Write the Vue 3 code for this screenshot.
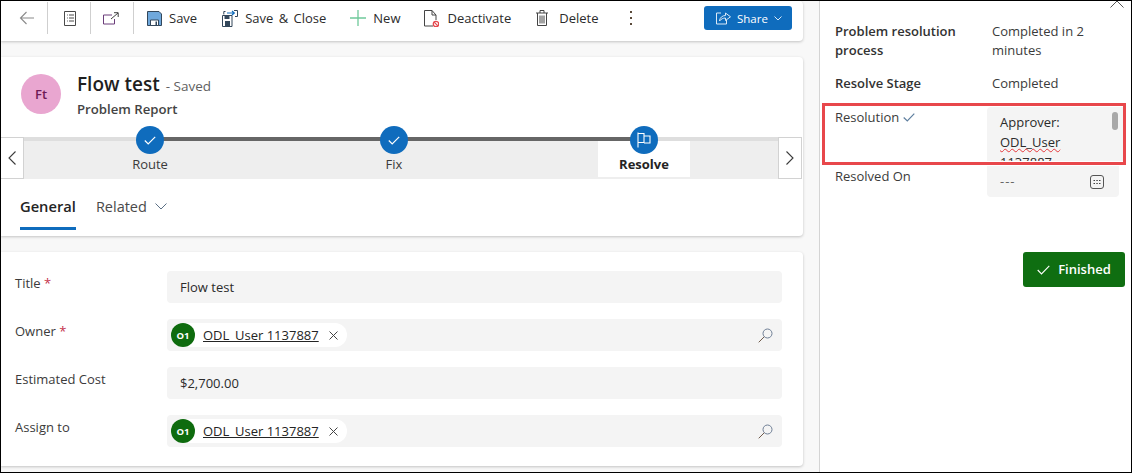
<script setup>
const fields = [
  { label: 'Title', required: true, value: 'Flow test' },
  { label: 'Owner', required: true, user: 'ODL_User 1137887' },
  { label: 'Estimated Cost', value: '$2,700.00' },
  { label: 'Assign to', user: 'ODL_User 1137887' },
]
</script>

<template>
  <div class="page">
    <div class="main">
      <div class="card toolbar">
        <svg class="back" width="16" height="14" viewBox="0 0 16 14" fill="none" stroke="#8a8a8a" stroke-width="1.1"><path d="M15 7H1.5M7.5 1 1.5 7l6 6" /></svg>
        <span class="sep"></span>
        <svg class="form-icon" width="14" height="17" viewBox="0 0 14 17" fill="none" stroke="#4a4a4a"><path d="M1.5 1.5h11v14h-11zM4 5h.8M6 5h5M4 8h.8M6 8h5M4 11h.8M6 11h5" /></svg>
        <span class="sep"></span>
        <svg class="open-icon" width="16" height="13" viewBox="0 0 16 13" fill="none"><path d="M9 3H.5v9h11V7" stroke="#6b3d7a" /><path d="M8 7l7-6M11 .7h4.2V5" stroke="#404040" /></svg>
        <span class="sep"></span>

        <button class="tool first" type="button">
          <svg width="15" height="15" viewBox="0 0 15 15"><path d="M.5.5h11.500l2.500 2.500v11.500H.5z" fill="#6fa8dc" stroke="#33475b" /><path d="M3.500 9h8v5.500h-8z" fill="#fff" stroke="#33475b" /><path d="M8.500 10.500h1.500v4H8.500z" fill="#33475b" /></svg>
          Save
        </button>
        <button class="tool save-close" type="button">
          <svg width="16" height="17" viewBox="0 0 16 17" fill="none"><path d="M.5 5.500h9.500v11H.5z" fill="#fff" stroke="#33475b" /><path d="M3 11h5v5H3z" fill="#33475b" /><path d="M2.500 6h5v3h-5z" fill="#33475b" /><path d="M3.500 1.500H1.800v3M12 .5h3.500v6H13" stroke="#33475b" /><path d="M5 3h7M10 1l2.300 2L10 5" stroke="#0f6cbd" stroke-width="1.200" /></svg>
          Save &amp; Close
        </button>
        <button class="tool" type="button">
          <svg width="16" height="16" viewBox="0 0 16 16" fill="none" stroke="#6fc99a" stroke-width="1.300"><path d="M8 0v16M0 8h16" /></svg>
          New
        </button>
        <button class="tool deactivate" type="button">
          <svg width="15" height="17" viewBox="0 0 15 17" fill="none"><path d="M9 16H.5V.5H8L12 5v5M8 .5V5h4" stroke="#444" /><circle cx="12" cy="14" r="2.700" stroke="#e5484d" stroke-width="1.300" fill="#fff" /><path d="M10.200 12.200l3.600 3.600" stroke="#e5484d" stroke-width="1.200" /></svg>
          Deactivate
        </button>
        <button class="tool delete" type="button">
          <svg width="12" height="16" viewBox="0 0 12 16" fill="none" stroke="#444"><path d="M0 3h12M4 3V.5h4V3M1.500 3v12.500h9V3M4 5.500v8M6 5.500v8M8 5.500v8" /></svg>
          Delete
        </button>
        <span class="kebab"><i></i><i></i><i></i></span>
        <button class="share" type="button">
          <svg width="15" height="14" viewBox="0 0 15 14" fill="none" stroke="#dbe9f6"><path d="M5 2H.5v11h10V9" /><path d="M3.500 10c.2-3.500 3-5.500 6-5.500V2L14.500 5.800 9.500 9.500V7C7 7 5 8 3.500 10z" /></svg>
          <span>Share</span>
          <svg width="8" height="5" viewBox="0 0 8 5" fill="none" stroke="#dbe9f6"><path d="M.5.5 4 4 7.500.5" /></svg>
        </button>
      </div>

      <div class="card header">
        <div class="record">
          <div class="avatar">Ft</div>
          <div>
            <div class="title-line"><span class="title">Flow test</span><span class="saved">- Saved</span></div>
            <div class="entity">Problem Report</div>
          </div>
        </div>

        <div class="bpf">
          <button class="nav" type="button">
            <svg width="8" height="14" viewBox="0 0 8 14" fill="none" stroke="#3b3b3b" stroke-width="1.100"><path d="M7.500.5 1 7l6.500 6.500" /></svg>
          </button>
          <div class="stages">
            <span class="rail"></span>
            <span class="rail-done"></span>
            <div class="stage">
              <span class="dot"><svg width="12" height="9" viewBox="0 0 12 9" fill="none" stroke="#fff" stroke-width="1.200"><path d="M.8 4.500 4.200 8 11.200.8" /></svg></span>
              <span class="stage-name">Route</span>
            </div>
            <div class="stage">
              <span class="dot"><svg width="12" height="9" viewBox="0 0 12 9" fill="none" stroke="#fff" stroke-width="1.200"><path d="M.8 4.500 4.200 8 11.200.8" /></svg></span>
              <span class="stage-name">Fix</span>
            </div>
            <div class="stage current">
              <span class="dot"><svg width="14" height="16" viewBox="0 0 14 16" fill="none" stroke="#fff" stroke-width="1.100"><path d="M1 .5V15.500M1 1.500h6v9H1M7 4h6v7H7" /></svg></span>
              <span class="stage-name">Resolve</span>
            </div>
          </div>
          <button class="nav" type="button">
            <svg width="8" height="14" viewBox="0 0 8 14" fill="none" stroke="#3b3b3b" stroke-width="1.100"><path d="M.5.500 7 7 .5 13.500" /></svg>
          </button>
        </div>

        <div class="tabs">
          <span class="tab active">General</span>
          <span class="tab">Related
            <svg width="12" height="7" viewBox="0 0 12 7" fill="none" stroke="#5b6f85"><path d="M.5.500 6 6 11.500.5" /></svg>
          </span>
        </div>
      </div>

      <div class="card form">
        <div v-for="f in fields" :key="f.label" class="row">
          <div class="label">{{ f.label }}<span v-if="f.required" class="req"> *</span></div>
          <div class="input">
            <template v-if="f.user">
              <span class="chip">
                <span class="chip-avatar">O1</span>
                <span class="chip-name">{{ f.user }}</span>
                <svg width="9" height="9" viewBox="0 0 9 9" fill="none" stroke="#444"><path d="M.5.500l8 8M8.500.500l-8 8" /></svg>
              </span>
              <svg class="search" width="15" height="15" viewBox="0 0 15 15" fill="none"><circle cx="9.500" cy="5.500" r="4.500" stroke="#6f7f96" /><path d="M6.200 8.800.7 14.300" stroke="#6f5a4a" /></svg>
            </template>
            <span v-else class="value">{{ f.value }}</span>
          </div>
        </div>
      </div>
    </div>

    <aside class="panel">
      <svg class="collapse" width="14" height="8" viewBox="0 0 14 8" fill="none" stroke="#555"><path d="M.5 7.500 7 1l6.500 6.500" /></svg>

      <div class="prow first">
        <div class="plabel strong">Problem resolution process</div>
        <div class="pvalue">Completed in 2 minutes</div>
      </div>
      <div class="prow stage-row">
        <div class="plabel strong">Resolve Stage</div>
        <div class="pvalue">Completed</div>
      </div>
      <div class="prow resolution">
        <div class="plabel">Resolution
          <svg width="12" height="9" viewBox="0 0 12 9" fill="none" stroke="#5f7f9f" stroke-width="1.200"><path d="M.7 4.500 4.300 8 11.300.7" /></svg>
        </div>
        <div class="textarea">
          <div>Approver:</div>
          <div><span class="squiggle">ODL_User</span></div>
          <div>1137887</div>
          <span class="thumb"></span>
        </div>
        <span class="highlight"></span>
      </div>
      <div class="prow">
        <div class="plabel">Resolved On</div>
        <div class="date">
          <span class="empty">---</span>
          <svg width="14" height="14" viewBox="0 0 14 14" fill="none"><rect x=".5" y=".5" width="13" height="13" rx="2.500" stroke="#555" /><path d="M3.500 5.500h1.500M6.300 5.500h1.500M9 5.500h1.500M3.500 8.500h1.500M6.300 8.500h1.500M9 8.500h1.500" stroke="#444" /></svg>
        </div>
      </div>

      <button class="finished" type="button">
        <svg width="13" height="10" viewBox="0 0 13 10" fill="none" stroke="#fff" stroke-width="1.100"><path d="M.7 5 4.500 9 12.300.8" /></svg>
        Finished
      </button>
    </aside>
  </div>
</template>

<style>
body {
  background: #fff;
}
</style>

<style scoped>
.page {
  display: flex;
  box-sizing: border-box;
  width: 1132px;
  height: 473px;
  overflow: hidden;
  border: 1px solid #000;
  font-family: "Open Sans", "Noto Sans", sans-serif;
  font-size: 13px;
  color: #2b2b2b;
  background: #fff;
}

button {
  padding: 0;
  border: none;
  background: none;
  font: inherit;
  color: inherit;
}

.main {
  display: flex;
  flex-direction: column;
  gap: 16px;
  box-sizing: border-box;
  width: 819px;
  padding-right: 16px;
  background: #f8f8f8;
  border-right: 1px solid #d4d4d4;
}

.card {
  background: #fff;
  border-radius: 0 4px 4px 0;
  box-shadow: 0 1px 3px rgba(0, 0, 0, .22);
}

.toolbar {
  display: flex;
  align-items: center;
  box-sizing: border-box;
  height: 40px;
  padding-bottom: 6px;
  flex: none;
}

.back {
  margin-left: 18px;
}

.sep {
  align-self: flex-start;
  width: 1px;
  height: 32px;
  margin-top: 1px;
  background: #cfcfcf;
}

.back + .sep {
  margin-left: 12px;
}

.form-icon {
  margin: 0 13px 0 15px;
}

.open-icon {
  margin: 0 14px 0 12px;
}

.tool {
  display: flex;
  align-items: center;
  gap: 7px;
  margin-left: 24px;
  white-space: nowrap;
}

.tool.first {
  margin-left: 13px;
}

.save-close {
  margin-left: 25px;
  word-spacing: 2px;
}

.deactivate {
  gap: 8px;
}

.delete {
  gap: 11px;
  margin-left: 25px;
}

.kebab {
  display: flex;
  flex-direction: column;
  gap: 4px;
  margin-left: 32px;
}

.kebab i {
  width: 2px;
  height: 2px;
  background: #5a4a3a;
}

.share {
  display: flex;
  align-items: center;
  gap: 6px;
  box-sizing: border-box;
  width: 88px;
  height: 24px;
  margin-left: auto;
  margin-right: 11px;
  padding-left: 12px;
  border-radius: 3px;
  background: #0f6cbd;
  color: #fff;
  font-size: 11.500px;
}

.header {
  display: flex;
  flex-direction: column;
  height: 179px;
  flex: none;
}

.record {
  display: flex;
  gap: 16px;
  height: 80px;
  box-sizing: border-box;
  padding: 17px 0 0 20px;
}

.avatar {
  display: flex;
  align-items: center;
  justify-content: center;
  width: 40px;
  height: 40px;
  border-radius: 50%;
  background: #e9a6d0;
  color: #6d1a55;
  font-weight: 600;
}

.title-line {
  display: flex;
  align-items: baseline;
  gap: 6px;
  height: 24px;
  margin-top: -3px;
}

.title {
  font-size: 19px;
  font-weight: 600;
  color: #1f1f1f;
}

.saved {
  color: #616161;
  font-size: 13.500px;
}

.entity {
  margin-top: 5px;
  font-size: 13.200px;
  font-weight: 600;
  color: #444;
}

.bpf {
  display: flex;
  height: 42px;
  margin-right: 1px;
}

.nav {
  display: flex;
  align-items: center;
  justify-content: center;
  box-sizing: border-box;
  width: 23px;
  border: 1px solid #d2d2d2;
  border-left: none;
  background: #fff;
}

.nav:last-child {
  width: 24px;
  border-left: 1px solid #d2d2d2;
  border-right: 1px solid #d2d2d2;
}

.stages {
  position: relative;
  display: grid;
  grid-template-columns: 252px 236px 264px;
  flex: 1;
  background: #eee;
}

/* progress line behind the stage dots */
.rail,
.rail-done {
  position: absolute;
  top: 0;
  height: 4px;
}

.rail {
  left: 0;
  right: 0;
  background: #dedede;
}

.rail-done {
  left: 126px;
  width: 494px;
  background: #666;
}

.stage {
  position: relative;
  display: flex;
  flex-direction: column;
  align-items: center;
  height: 42px;
}

.dot {
  display: flex;
  align-items: center;
  justify-content: center;
  width: 28px;
  height: 28px;
  margin-top: -11px;
  border-radius: 50%;
  background: #0f6cbd;
  z-index: 1;
}

.stage-name {
  line-height: 20px;
  color: #3b3b3b;
}

.stage.current .stage-name {
  position: relative;
  font-weight: 700;
  color: #242424;
}

/* white tab behind the active stage */
.stage.current::before {
  content: '';
  position: absolute;
  top: 4px;
  left: 86px;
  width: 92px;
  height: 36px;
  background: #fff;
}

.tabs {
  display: flex;
  gap: 20px;
  padding-left: 19px;
}

.tab {
  display: flex;
  align-items: center;
  gap: 8px;
  box-sizing: border-box;
  height: 51px;
  padding: 7px 0 3px;
  font-size: 14.500px;
  color: #4a4a4a;
}

.tab.active {
  padding: 5px 0 0;
  border-bottom: 3px solid #0f6cbd;
  font-size: 14.700px;
  font-weight: 600;
  color: #242424;
}

.form {
  display: flex;
  flex-direction: column;
  gap: 16px;
  height: 214px;
  box-sizing: border-box;
  padding: 19px 21px 0 14px;
  flex: none;
}

.row {
  display: flex;
  height: 32px;
}

.label {
  width: 152px;
  line-height: 24px;
  color: #3b3b3b;
}

.req {
  color: #c4314b;
}

.input {
  display: flex;
  align-items: center;
  justify-content: space-between;
  flex: 1;
  padding: 0 9px 0 4px;
  border-radius: 4px;
  background: #f4f4f4;
}

.value {
  margin-left: 9px;
}

.chip {
  display: flex;
  align-items: center;
  height: 24px;
  width: 176px;
  border-radius: 12px;
  background: #fff;
}

.chip-avatar {
  display: flex;
  align-items: center;
  justify-content: center;
  width: 24px;
  height: 24px;
  margin-right: 8px;
  border-radius: 50%;
  background: #0e6b0e;
  color: #fff;
  font-size: 9.500px;
  font-weight: 700;
}

.chip-name {
  margin-right: 10px;
  text-decoration: underline;
  color: #242424;
  white-space: nowrap;
}

.panel {
  position: relative;
  display: flex;
  flex-direction: column;
  flex: 1;
  padding-left: 15px;
  line-height: 19px;
}

.collapse {
  position: absolute;
  top: -1px;
  right: 7px;
}

.prow {
  position: relative;
  display: grid;
  grid-template-columns: 152px 132px;
}

.prow.first {
  margin-top: 20px;
}

.stage-row {
  margin-top: 13px;
}

.resolution {
  height: 59px;
  margin-top: 14px;
  grid-template-columns: 152px 136px;
}

.plabel {
  padding-top: 1px;
  color: #3b3b3b;
}

.strong {
  font-weight: 600;
  color: #323232;
}

.pvalue {
  padding: 1px 0 0 5px;
  color: #3b3b3b;
}

/* the third line is cut by the box, as in a scrolled textarea */
.textarea {
  position: relative;
  box-sizing: border-box;
  height: 54px;
  padding: 5px 0 0 13px;
  overflow: hidden;
  background: #f4f4f4;
  border-radius: 4px 0 0 0;
  line-height: 20px;
}

.squiggle {
  text-decoration: underline wavy #e5383b 1.2px;
}

.thumb {
  position: absolute;
  top: 5px;
  right: 5px;
  width: 6px;
  height: 18px;
  border-radius: 3px;
  background: #a8a8a8;
}

/* review highlight drawn over the Resolution row */
.highlight {
  position: absolute;
  top: -4px;
  left: -13px;
  width: 304px;
  height: 62px;
  box-sizing: border-box;
  border: 3px solid #e8474b;
  pointer-events: none;
}

.date {
  display: flex;
  align-items: center;
  justify-content: space-between;
  box-sizing: border-box;
  height: 31px;
  padding: 0 15px 0 13px;
  border-radius: 0 0 4px 4px;
  background: #f4f4f4;
  color: #666;
}

.empty {
  letter-spacing: 1px;
}

.finished {
  display: flex;
  align-items: center;
  justify-content: center;
  gap: 8px;
  align-self: flex-end;
  width: 102px;
  height: 35px;
  margin-top: 55px;
  margin-right: 6px;
  border-radius: 3px;
  background: #0f6e11;
  color: #fff;
  font-weight: 600;
}
</style>
